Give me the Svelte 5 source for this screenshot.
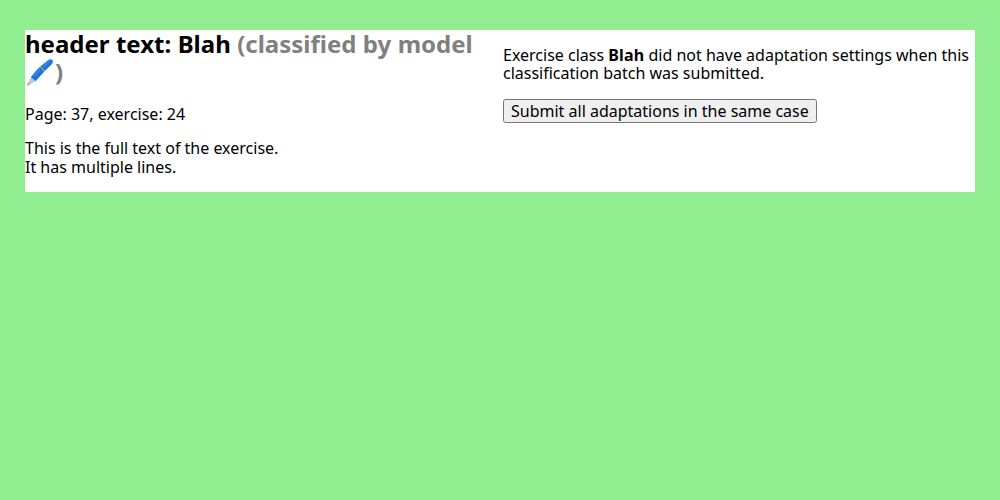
<script>
  const exercise = { page: 37, number: 24, text: 'This is the full text of the exercise.\nIt has multiple lines.' };
</script>

<main>
  <section class="left">
    <h2>header text: Blah <span class="by">(classified by model <svg class="pen" viewBox="0 0 30 28" role="img" aria-label="Edit">
      <path d="M1.9 27.9 3.6 24.3 5.3 26Z" fill="#858585" />
      <path d="M3.2 25 6 19 10.5 23.2 5 26.6Z" fill="#c3c8d0" />
      <path d="M5.8 19.2 Q10.5 13 15.4 8.6 L19.8 13.1 Q15.2 18.3 10.6 23.3Z" fill="#1b75dc" />
      <path d="M15.4 8.6 22.3 3 Q25.7 .7 27.3 2.2 Q28.7 3.9 26.2 6.7 L19.8 13.1Z" fill="#1b75dc" />
      <path d="M9 18 15.3 11.7 M18.3 8.8 24.5 3.9" stroke="#3f93ee" stroke-width="1.1" fill="none" />
      <path d="M15.5 9.1 19.3 13.1" stroke="#a9a052" stroke-width="1.4" />
      <path d="M17.3 6.7 24 1.3 26.8 .9" stroke="#b3bfcc" stroke-width=".9" fill="none" />
    </svg>)</span></h2>
    <p>Page: {exercise.page}, exercise: {exercise.number}</p>
    <p class="full">{exercise.text}</p>
  </section>
  <section class="right">
    <p>Exercise class <b>Blah</b> did not have adaptation settings when this classification batch was submitted.</p>
    <p><button>Submit all adaptations in the same case</button></p>
  </section>
</main>

<style>
  :global(body) { background: lightgreen; }
  main {
    margin: 30px 25px;
    display: grid;
    grid-template-columns: 1fr 1fr;
    gap: 6px;
    background: white;
    color: black;
    font-family: "Noto Sans", sans-serif;
    font-size: 16px;
    line-height: 18.4px;
  }
  section { min-width: 0; }
  h2 { margin: 0 0 19px; font-size: 24px; line-height: 28px; word-spacing: 0.18px; }
  p { margin: 16px 0; }
  b { letter-spacing: 0.15px; }
  .by { color: gray; }
  .pen { width: 30px; height: 28px; vertical-align: top; }
  .full { white-space: pre-wrap; }
  button { font-family: inherit; font-size: 16px; line-height: 18px; padding: 1px 6px; vertical-align: top; }
</style>
